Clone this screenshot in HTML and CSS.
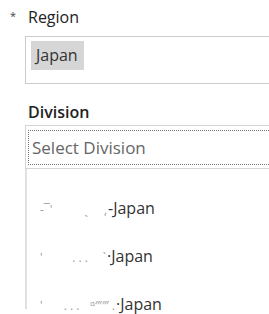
FILE: index.html
```html
<!DOCTYPE html>
<html>
<head>
<meta charset="utf-8">
<link rel="stylesheet" href="styles.css">
</head>
<body>
<div class="form">
  <div class="field">
    <div class="label"><span class="req">*</span><span class="label-text">Region</span></div>
    <div class="input region-input">
      <span class="chip">Japan</span>
    </div>
  </div>
  <div class="field division">
    <div class="label"><span class="label-text bold">Division</span></div>
    <div class="input select-input">
      <div class="focus">Select Division</div>
    </div>
    <ul class="list">
      <li><span class="redact r1"><span>‐‾'</span><span></span><span>ˎ</span><span>,</span></span>-Japan</li>
      <li><span class="redact r2"><span>'</span><span></span><span>. . .</span><span>`</span></span>·Japan</li>
      <li><span class="redact r3"><span>'</span><span></span><span>. . .</span><span>ᵅ‴‴ .</span></span>·Japan</li>
    </ul>
  </div>
</div>
</body>
</html>
```

FILE: styles.css
```css
html, body {
  margin: 0;
  padding: 0;
  background: #fff;
  overflow: hidden;
  height: 314px;
}
body {
  font-family: "Open Sans", "Noto Sans", sans-serif;
  color: #222;
  width: 269px;
}
.form {
  padding: 4px 0 0 0;
}
.label {
  display: flex;
  align-items: flex-start;
  height: 26px;
  font-size: 16px;
  line-height: 26px;
}
.req {
  width: 28px;
  padding-left: 10px;
  font-size: 11px;
  line-height: 24px;
  color: #444;
  box-sizing: border-box;
}
.label-text {
  color: #222;
}
.label-text.bold {
  font-weight: 600;
  margin-left: 28px;
}
.input {
  margin-left: 25px;
  margin-top: 6px;
  border: 1px solid #ccc;
  border-right: none;
  box-sizing: border-box;
}
.region-input {
  height: 48px;
  padding: 4px 5px;
}
.chip {
  display: inline-block;
  background: #d6d6d6;
  color: #333;
  font-size: 16px;
  line-height: 29px;
  height: 29px;
  padding: 0 6px 0 5px;
}
.division {
  margin-top: 17px;
}
.division .label {
  height: 22px;
  line-height: 22px;
}
.select-input {
  margin-top: 2px;
  height: 44px;
  padding: 4px 0 3px 2px;
  border-color: #d4d4d4;
}
.focus {
  height: 35px;
  box-sizing: border-box;
  border: 1px dotted #777;
  border-right: none;
  font-size: 17px;
  line-height: 33px;
  color: #666;
  padding-left: 3px;
}
.list {
  list-style: none;
  margin: 0 0 0 25px;
  padding: 0;
  border-left: 2px solid #e0e0e0;
  height: 140px;
}
.list li {
  display: flex;
  align-items: baseline;
  font-size: 16px;
  height: 48px;
  line-height: 26px;
  padding-top: 26px;
  padding-left: 13px;
  box-sizing: border-box;
  color: #333;
  white-space: nowrap;
}
.redact {
  display: inline-flex;
  justify-content: space-between;
  color: #a0a0a0;
  font-size: 12px;
  white-space: pre;
  overflow: hidden;
  padding-right: 1px;
}
.r1 { width: 67px; }
.r2 { width: 66px; }
.r3 { width: 75px; }
```
